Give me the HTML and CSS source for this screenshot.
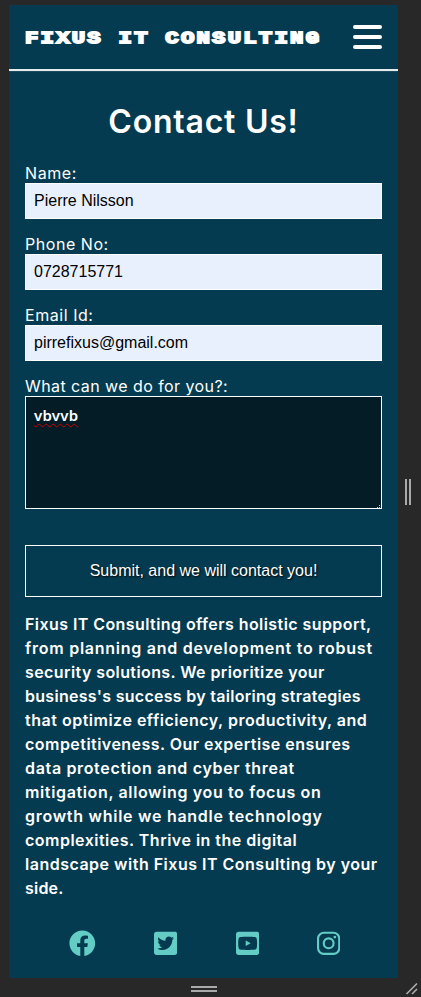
FILE: index.html
```html
<!DOCTYPE html>
<html lang="en">
<head>
<meta charset="utf-8">
<title>Fixus IT Consulting</title>
<link rel="stylesheet" href="styles.css">
</head>
<body>
<div class="device">
  <div class="page">
    <header class="header">
      <div class="logo"><span class="logo-text">FIXUS IT CONSULTING</span></div>
      <div class="menu"><i></i><i></i><i></i></div>
    </header>
    <main class="content">
      <h1 class="title"><span>Contact Us!</span></h1>
      <form class="form">
        <div class="field"><label class="label"><span class="l-name">Name:</span></label><div class="input">Pierre Nilsson</div></div>
        <div class="field"><label class="label"><span class="l-phone">Phone No:</span></label><div class="input">0728715771</div></div>
        <div class="field"><label class="label"><span class="l-email">Email Id:</span></label><div class="input">pirrefixus@gmail.com</div></div>
        <div class="field"><label class="label"><span class="l-what">What can we do for you?:</span></label>
          <div class="message"><span class="typed">vbvvb</span>
            <svg class="grip" width="4" height="4" viewBox="0 0 4 4"><path d="M0 3h1v1H0zM2 3h1v1H2zM2 1h1v1H2z" fill="#ccc"/></svg>
          </div>
        </div>
        <div class="submit"><span>Submit, and we will contact you!</span></div>
      </form>
      <p class="about">
        <span class="a1">Fixus IT Consulting offers holistic support,</span>
        <span class="a2">from planning and development to robust</span>
        <span class="a3">security solutions. We prioritize your</span>
        <span class="a4">business's success by tailoring strategies</span>
        <span class="a5">that optimize efficiency, productivity, and</span>
        <span class="a6">competitiveness. Our expertise ensures</span>
        <span class="a7">data protection and cyber threat</span>
        <span class="a8">mitigation, allowing you to focus on</span>
        <span class="a9">growth while we handle technology</span>
        <span class="a10">complexities. Thrive in the digital</span>
        <span class="a11">landscape with Fixus IT Consulting by your</span>
        <span class="a12">side.</span>
      </p>
      <footer class="social">
        <svg width="26.6" height="26.6" viewBox="0 0 512 512"><path d="M504 256C504 119 393 8 256 8S8 119 8 256c0 123.78 90.69 226.38 209.25 245V327.69h-63V256h63v-54.64c0-62.15 37-96.48 93.67-96.48 27.14 0 55.52 4.84 55.52 4.84v61h-31.28c-30.8 0-40.41 19.12-40.41 38.73V256h68.78l-11 71.69h-57.78V501C413.31 482.38 504 379.78 504 256z"/></svg>
        <svg width="23.3" height="26.6" viewBox="0 0 448 512"><path d="M400 32H48C21.5 32 0 53.5 0 80v352c0 26.5 21.5 48 48 48h352c26.5 0 48-21.5 48-48V80c0-26.5-21.5-48-48-48zm-48.9 158.8c.2 2.8.2 5.7.2 8.5 0 86.7-66 186.6-186.6 186.6-37.2 0-71.7-10.8-100.7-29.4 5.3.6 10.4.8 15.8.8 30.7 0 58.9-10.4 81.4-28-28.8-.6-53-19.5-61.3-45.5 10.1 1.5 19.2 1.5 29.6-1.2-30-6.1-52.5-32.5-52.5-64.4v-.8c8.7 4.9 18.9 7.9 29.6 8.3a65.447 65.447 0 0 1-29.2-54.6c0-12.2 3.2-23.4 8.9-33.1 32.3 39.8 80.8 65.8 135.2 68.6-9.3-44.5 24-80.6 64-80.6 18.9 0 35.9 7.9 47.9 20.7 14.8-2.8 29-8.3 41.6-15.8-4.9 15.2-15.2 28-28.8 36.1 13.2-1.4 26-5.1 37.8-10.2-8.9 13.1-20.1 24.7-32.9 34z"/></svg>
        <svg width="23.3" height="26.6" viewBox="0 0 448 512"><path d="M186.8 202.1l95.2 54.1-95.2 54.1V202.1zM448 80v352c0 26.5-21.5 48-48 48H48c-26.5 0-48-21.5-48-48V80c0-26.5 21.5-48 48-48h352c26.5 0 48 21.5 48 48zm-42 176.3s0-59.6-7.6-88.2c-4.2-15.8-16.5-28.2-32.2-32.4C337.9 128 224 128 224 128s-113.9 0-142.2 7.7c-15.7 4.2-28 16.6-32.2 32.4-7.6 28.5-7.6 88.2-7.6 88.2s0 59.6 7.6 88.2c4.2 15.8 16.5 27.7 32.2 31.9C110.1 384 224 384 224 384s113.9 0 142.2-7.7c15.7-4.2 28-16.1 32.2-31.9 7.6-28.5 7.6-88.1 7.6-88.1z"/></svg>
        <svg width="23.3" height="26.6" viewBox="0 0 448 512"><rect x="20" y="52" width="408" height="408" rx="112" fill="none" stroke="#63cdc5" stroke-width="41"/><circle cx="224" cy="256" r="95" fill="none" stroke="#63cdc5" stroke-width="41"/><circle cx="343.500" cy="136.500" r="27"/></svg>
      </footer>
    </main>
  </div>
  <div class="side"><i></i><i></i></div>
  <div class="bottom"><i></i><i></i></div>
  <svg class="corner" width="16" height="16" viewBox="0 0 16 16"><path d="M1.500 13 12 2.500M7 13l5-5" fill="none" stroke="#aaa" stroke-width="1.700"/></svg>
</div>
</body>
</html>
```
FILE: styles.css
```css
* { box-sizing: border-box; }
body { margin: 0; background: #282828; }
.device {
  display: grid;
  grid-template-columns: 389px 23px;
  grid-template-rows: 973px 19px;
  width: 421px;
  height: 997px;
  padding: 5px 0 0 9px;
  background: #282828;
}
.page { background: #053b50; color: #fff; font-family: Inter, sans-serif; font-size: 16px; }
.header {
  display: flex;
  justify-content: space-between;
  align-items: center;
  height: 66px;
  padding: 0 16px;
  border-bottom: 2px solid #e4ecee;
  box-shadow: 0 1px 1px -1px #8199a3;
}
.logo { width: 300px; height: 20px; }
.logo-text {
  display: inline-block;
  font: bold 17px/20px "Liberation Mono", monospace;
  letter-spacing: 1.7px;
  white-space: nowrap;
  transform: scaleX(1.31);
  transform-origin: 0 50%;
  -webkit-text-stroke: 1.800px #fff;
}
.menu { display: flex; flex-direction: column; gap: 6px; width: 29px; }
.menu i { height: 4px; border-radius: 2px; background: #fff; }
.content { padding: 0 16px; }
.title {
  margin: 25px 0 0;
  height: 50px;
  text-align: center;
  font-size: 32px;
  line-height: 51px;
  font-weight: 600;
  letter-spacing: 0.770px;
}
.form { margin-top: 19px; }
.field { margin-bottom: 17px; }
.label { display: block; height: 18px; line-height: 17px; white-space: nowrap; }
.l-name { letter-spacing: 0.600px; }
.l-phone { letter-spacing: 0.550px; }
.l-email { letter-spacing: 0.550px; }
.l-what { letter-spacing: 0.430px; }
.input {
  height: 36px;
  padding: 0 8px;
  border: 1px solid #fff;
  background: #e8f0fe;
  color: #000;
  font: 16px/34px "Liberation Sans", sans-serif;
}
.message {
  position: relative;
  height: 113px;
  padding: 8px;
  border: 1px solid #fff;
  background: #031c26;
  font: 600 15px/20px "Noto Sans", sans-serif;
}
.typed { letter-spacing: 0.250px; text-decoration: underline wavy #d00000 1px; text-underline-offset: 2px; text-decoration-skip-ink: none; }
.grip { position: absolute; right: 0; bottom: 0; }
.submit {
  height: 52px;
  margin-top: 36px;
  border: 1px solid #fff;
  text-align: center;
  font: 16px/50px "Liberation Sans", sans-serif;
  text-shadow: 1px 1px 2px #000;
}
.about { margin: 15px 0 0; font-weight: 600; line-height: 24px; white-space: nowrap; }
.about span { display: block; width: max-content; }
.about .a1 { letter-spacing: 0.430px; }
.about .a2 { letter-spacing: 0.750px; }
.about .a3 { letter-spacing: 0.410px; }
.about .a4 { letter-spacing: 0.290px; }
.about .a5 { letter-spacing: 0.510px; }
.about .a6 { letter-spacing: 0.470px; }
.about .a7 { letter-spacing: 0.660px; }
.about .a8 { letter-spacing: 0.640px; }
.about .a9 { letter-spacing: 0.730px; }
.about .a10 { letter-spacing: 0.490px; }
.about .a11 { letter-spacing: 0.500px; }
.about .a12 { letter-spacing: 0.200px; }
.social { display: flex; justify-content: space-around; margin: 30px 0 0 15px; width: 329.500px; fill: #63cdc5; }
.side { display: flex; justify-content: center; align-items: center; gap: 2px; padding-right: 3px; }
.side i { width: 2px; height: 26px; background: #aaa; }
.bottom { display: flex; flex-direction: column; justify-content: center; align-items: center; gap: 2px; padding-top: 3px; }
.bottom i { width: 26px; height: 2px; background: #aaa; }
.corner { align-self: end; justify-self: end; }
```
